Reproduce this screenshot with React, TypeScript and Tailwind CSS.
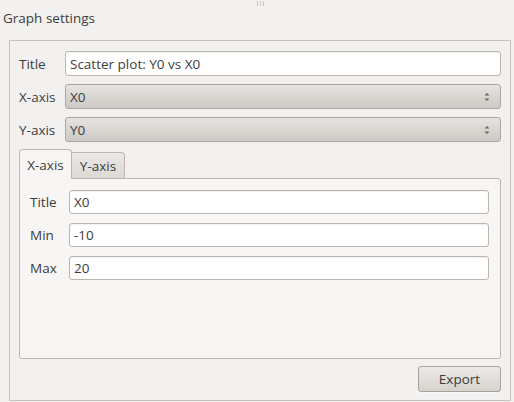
function ComboArrows() {
  return (
    <svg width="8" height="12" viewBox="0 0 8 12" className="text-[#6a6661]">
      <path d="M1.5 4.5 L4 2 L6.5 4.5 Z" fill="currentColor" />
      <path d="M1.5 7.5 L4 10 L6.5 7.5 Z" fill="currentColor" />
    </svg>
  )
}

function TextField({ value, h = "h-[25px]" }: { value: string; h?: string }) {
  return (
    <div
      className={`${h} flex-1 flex items-center px-[4px] bg-white border border-[#bcb5ad] rounded-[3px] shadow-[inset_0_1px_1px_rgba(0,0,0,0.06)] text-[#3c3c3c]`}
    >
      {value}
    </div>
  )
}

function Combo({ value }: { value: string }) {
  return (
    <div className="h-[25px] flex-1 flex items-center justify-between pl-[4px] pr-[9px] border border-[#aea79f] rounded-[3px] bg-gradient-to-b from-[#e6e4e1] to-[#cdc9c4] text-[#3c3c3c]">
      <span>{value}</span>
      <ComboArrows />
    </div>
  )
}

export default function App() {
  return (
    <div
      className="relative w-[514px] h-[402px] overflow-hidden bg-[#f2f1f0] text-[13.5px] leading-[16px] text-[#3c3c3c] flex flex-col"
      style={{ fontFamily: "'Open Sans', 'Noto Sans', sans-serif" }}
    >
      {/* splitter grip */}
      <div className="absolute left-[257px] top-[1px] flex gap-[2px]">
        <div className="w-[1px] h-[5px] bg-[#c8c4bf]" />
        <div className="w-[1px] h-[5px] bg-[#c8c4bf]" />
        <div className="w-[1px] h-[5px] bg-[#c8c4bf]" />
      </div>

      <div className="h-[40px] pl-[3px] pt-[10px]">Graph settings</div>

      <div className="flex-1 ml-[9px] mr-[3px] mb-[1px] border border-[#c9c2ba] flex flex-col pt-[10px] pl-[9px] pr-[9px]">
        <div className="flex items-center">
          <div className="w-[46px]">Title</div>
          <TextField value="Scatter plot: Y0 vs X0" />
        </div>
        <div className="flex items-center mt-[8px]">
          <div className="w-[46px]">X-axis</div>
          <Combo value="X0" />
        </div>
        <div className="flex items-center mt-[8px]">
          <div className="w-[46px]">Y-axis</div>
          <Combo value="Y0" />
        </div>

        {/* tabs */}
        <div className="flex items-end mt-[7px] h-[29px]">
          <div className="relative z-10 w-[53px] h-[30px] -mb-[1px] flex items-center justify-center border border-b-0 border-[#bdb6ae] rounded-t-[4px] bg-[#f7f6f5]">
            X-axis
          </div>
          <div className="w-[53px] h-[26px] flex items-center justify-center border border-l-0 border-b-0 border-[#bdb6ae] rounded-tr-[4px] bg-gradient-to-b from-[#ebe9e6] to-[#dcd9d5]">
            Y-axis
          </div>
        </div>
        <div className="h-[181px] border border-[#bdb6ae] rounded-b-[3px] rounded-tr-[3px] bg-[#f7f6f5] pt-[11px] pl-[10px] pr-[11px] flex flex-col gap-[9px]">
          <div className="flex items-center">
            <div className="w-[39px]">Title</div>
            <TextField value="X0" h="h-[24px]" />
          </div>
          <div className="flex items-center">
            <div className="w-[39px]">Min</div>
            <TextField value="-10" h="h-[24px]" />
          </div>
          <div className="flex items-center">
            <div className="w-[39px]">Max</div>
            <TextField value="20" h="h-[24px]" />
          </div>
        </div>

        <div className="flex justify-end mt-[7px]">
          <div className="w-[83px] h-[26px] flex items-center justify-center border border-[#a9a29a] rounded-[3px] bg-gradient-to-b from-[#eceae7] to-[#d6d3ce] shadow-[0_1px_0_rgba(255,255,255,0.6)]">
            Export
          </div>
        </div>
      </div>
    </div>
  )
}
